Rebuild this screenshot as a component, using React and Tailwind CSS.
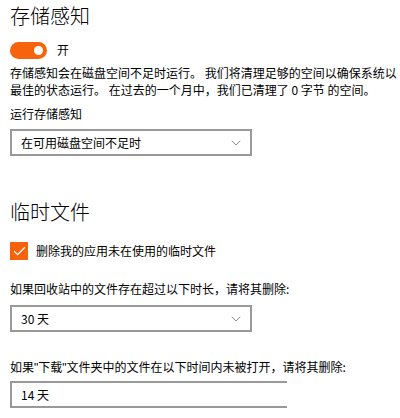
import { ChevronDown, Check } from 'lucide-react'

const font = { fontFamily: '"Noto Sans CJK SC", "Noto Sans", sans-serif' }

export default function App() {
  return (
    <div className="w-[400px] h-[418px] bg-white text-black overflow-hidden pl-[10px] pt-[2px]" style={font}>
      <h1 className="text-[20px] leading-[28px] font-light">存储感知</h1>

      <div className="flex items-center gap-[10px] mt-[11px]">
        <div className="w-[37px] h-[17px] rounded-full bg-[#f7630c] flex items-center justify-end pr-[4px]">
          <div className="w-[9px] h-[9px] rounded-full bg-white" />
        </div>
        <span className="text-[12px]">开</span>
      </div>

      <p className="text-[12px] leading-[17px] mt-[5px] whitespace-nowrap">
        存储感知会在磁盘空间不足时运行。 我们将清理足够的空间以确保系统以
        <br />
        最佳的状态运行。 在过去的一个月中，我们已清理了 0 字节 的空间。
      </p>

      <div className="text-[12px] leading-[17px] mt-[7px]">运行存储感知</div>
      <Select value="在可用磁盘空间不足时" className="mt-[7px]" />

      <h2 className="text-[20px] leading-[28px] font-light mt-[42px]">临时文件</h2>

      <label className="flex items-center gap-[8px] mt-[16px]">
        <span className="w-[18px] h-[18px] bg-[#f7630c] flex items-center justify-center">
          <Check size={15} strokeWidth={2} className="text-white" />
        </span>
        <span className="text-[12px]">删除我的应用未在使用的临时文件</span>
      </label>

      <div className="text-[12px] leading-[17px] mt-[20px]">如果回收站中的文件存在超过以下时长，请将其删除:</div>
      <Select value="30 天" className="mt-[8px]" />

      <div className="text-[12px] leading-[17px] mt-[26px] whitespace-nowrap">
        如果<span className="font-['Liberation_Sans']">"</span>下载<span className="font-['Liberation_Sans']">"</span>文件夹中的文件在以下时间内未被打开，请将其删除:
      </div>
      <div className="w-[277px] overflow-hidden mt-[4px]">
        <Select value="14 天" className="w-[300px]" />
      </div>
    </div>
  )
}

function Select({ value, className = 'w-[242px]' }) {
  return (
    <div className={`w-[242px] h-[27px] border-2 border-[#999999] flex items-center justify-between pl-[9px] pr-[6px] shrink-0 ${className}`}>
      <span className="text-[12px]">{value}</span>
      <ChevronDown size={16} strokeWidth={1} className="text-[#555]" />
    </div>
  )
}
